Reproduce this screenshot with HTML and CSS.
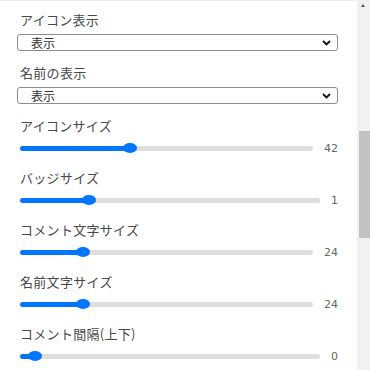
FILE: index.html
```html
<!DOCTYPE html>
<html lang="ja">
<head>
<meta charset="utf-8">
<link rel="stylesheet" href="styles.css">
</head>
<body>
<div class="page">
  <main class="panel">
    <div class="field">
      <label class="label">アイコン表示</label>
      <div class="select"><select><option>表示</option></select><svg class="chev" viewBox="0 0 9 6"><path d="M1 1 L4.5 4.5 L8 1"/></svg></div>
    </div>
    <div class="field">
      <label class="label">名前の表示</label>
      <div class="select"><select><option>表示</option></select><svg class="chev" viewBox="0 0 9 6"><path d="M1 1 L4.5 4.5 L8 1"/></svg></div>
    </div>
    <div class="field">
      <label class="label">アイコンサイズ</label>
      <div class="range-row"><input class="range" type="range" min="10" max="97" step="any" value="42" style="--p:0.3678"><span class="val">42</span></div>
    </div>
    <div class="field">
      <label class="label">バッジサイズ</label>
      <div class="range-row"><input class="range" type="range" min="0.5" max="2.8" step="any" value="1" style="--p:0.2174"><span class="val">1</span></div>
    </div>
    <div class="field">
      <label class="label">コメント文字サイズ</label>
      <div class="range-row"><input class="range" type="range" min="10" max="80" step="any" value="24" style="--p:0.2"><span class="val">24</span></div>
    </div>
    <div class="field">
      <label class="label">名前文字サイズ</label>
      <div class="range-row"><input class="range" type="range" min="10" max="80" step="any" value="24" style="--p:0.2"><span class="val">24</span></div>
    </div>
    <div class="field">
      <label class="label">コメント間隔(上下)</label>
      <div class="range-row"><input class="range" type="range" min="-2" max="70" step="any" value="0" style="--p:0.0278"><span class="val">0</span></div>
    </div>
  </main>
  <aside class="scrollbar"><span class="arrow"></span><span class="thumb"></span></aside>
</div>
</body>
</html>
```
FILE: styles.css
```css
html, body {
  margin: 0;
  padding: 0;
  height: 100%;
}
body {
  font-family: "Noto Sans CJK JP", "Noto Sans", sans-serif;
  background: #fff;
  overflow: hidden;
}
.page {
  display: flex;
  height: 370px;
}
.panel {
  flex: 1;
  min-width: 0;
  border-top: 1px solid #ececec;
  padding: 10px 19px 0 17px;
  overflow: hidden;
}
.field {
  margin-bottom: 13px;
}
.label {
  display: block;
  font-size: 13px;
  line-height: 18px;
  color: #484848;
  letter-spacing: 0.3px;
  padding-left: 3px;
}
.select {
  display: flex;
  align-items: center;
  margin-top: 5px;
  height: 17px;
  box-sizing: border-box;
  border: 1px solid #8c8c8c;
  border-radius: 3px;
}
.select select {
  flex: 1;
  min-width: 0;
  -webkit-appearance: none;
  appearance: none;
  border: 0;
  background: transparent;
  font-family: "Noto Sans CJK JP", sans-serif;
  font-size: 12px;
  line-height: 15px;
  height: 15px;
  padding: 0 0 0 13px;
  margin: 0;
  color: #333;
  outline: none;
}
.chev {
  width: 9px;
  height: 6px;
  margin-right: 6px;
  fill: none;
  stroke: #111;
  stroke-width: 1.9;
}
.range-row {
  display: flex;
  align-items: center;
  margin-top: 5px;
  height: 16px;
}
.range {
  flex: 1;
  min-width: 0;
  margin: 0 0 0 3px;
  height: 16px;
  -webkit-appearance: none;
  appearance: none;
  background: transparent;
}
.range::-webkit-slider-runnable-track {
  height: 5px;
  border-radius: 3px;
  background: linear-gradient(to right,
    #0075ff 0,
    #0075ff calc(var(--p) * (100% - 14px) + 7px),
    #dedede calc(var(--p) * (100% - 14px) + 7px),
    #dedede 100%);
}
.range::-webkit-slider-thumb {
  -webkit-appearance: none;
  appearance: none;
  width: 14px;
  height: 10px;
  margin-top: -2.5px;
  border: 0;
  border-radius: 50%;
  background: #0075ff;
}
.val {
  margin-left: 11px;
  font-family: "DejaVu Sans", sans-serif;
  font-size: 11px;
  color: #666;
}
.scrollbar {
  width: 13px;
  background: #f1f1f1;
  display: flex;
  flex-direction: column;
  align-items: flex-start;
}
.arrow {
  width: 0;
  height: 0;
  margin: 4px 0 0 4px;
  border-left: 2.5px solid transparent;
  border-right: 2.5px solid transparent;
  border-bottom: 3px solid #555;
}
.thumb {
  margin: 124px 0 0 2px;
  width: 11px;
  height: 107px;
  background: #c1c1c1;
}
```
